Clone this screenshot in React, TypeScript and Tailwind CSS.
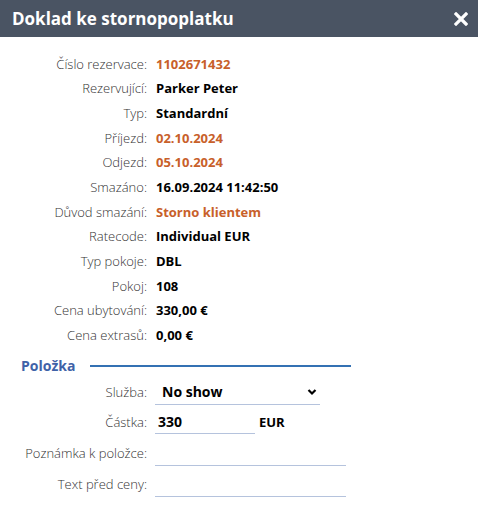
import React from 'react';

const rows = [
  { label: 'Číslo rezervace:', value: '1102671432', accent: true },
  { label: 'Rezervující:', value: 'Parker Peter' },
  { label: 'Typ:', value: 'Standardní' },
  { label: 'Příjezd:', value: '02.10.2024', accent: true },
  { label: 'Odjezd:', value: '05.10.2024', accent: true },
  { label: 'Smazáno:', value: '16.09.2024 11:42:50' },
  { label: 'Důvod smazání:', value: 'Storno klientem', accent: true },
  { label: 'Ratecode:', value: 'Individual EUR' },
  { label: 'Typ pokoje:', value: 'DBL' },
  { label: 'Pokoj:', value: '108' },
  { label: 'Cena ubytování:', value: '330,00 €' },
  { label: 'Cena extrasů:', value: '0,00 €' },
];

const App: React.FC = () => {
  return (
    <div className="w-[478px] h-[507px] overflow-hidden bg-white text-[13px] text-[#222]" style={{ fontFamily: '"Open Sans", sans-serif' }}>
      <div className="h-[37px] bg-[#4a5463] flex items-center justify-between pl-3 pr-[10px]">
        <h2 className="text-white font-bold text-[17px]">Doklad ke stornopoplatku</h2>
        <svg width="14" height="14" viewBox="0 0 14 14">
          <path d="M2 2 L12 12 M12 2 L2 12" stroke="white" strokeWidth="3.2" strokeLinecap="square" />
        </svg>
      </div>

      <div className="pt-[15px]">
        {rows.map(row => (
          <div key={row.label} className="flex items-center h-[24.7px]">
            <div className="w-[147px] text-right text-[#333] font-light">{row.label}</div>
            <div className={`ml-[9px] font-bold ${row.accent ? 'text-[#c8602a]' : 'text-black'}`}>{row.value}</div>
          </div>
        ))}
      </div>

      <div className="flex items-center mt-[7px] pl-[21px]">
        <span className="font-bold text-[#3f62a8] text-[14px]">Položka</span>
        <div className="ml-[15px] w-[261px] h-[1.5px] bg-[#3471b3]" />
      </div>

      <div className="flex items-end mt-[5px]">
        <div className="w-[147px] text-right text-[#333] font-light pb-[3px]">Služba:</div>
        <div className="ml-[8px] w-[165px] border-b border-[#b5c3dd] flex items-center justify-between pl-[7px] pr-[3px] pb-[2px]">
          <span className="font-bold text-black text-[14px]">No show</span>
          <svg width="10" height="8" viewBox="0 0 10 8">
            <path d="M1.5 2 L5 5.5 L8.5 2" stroke="black" strokeWidth="2.2" fill="none" />
          </svg>
        </div>
      </div>

      <div className="flex items-end mt-[6px]">
        <div className="w-[147px] text-right text-[#333] font-light pb-[2px]">Částka:</div>
        <div className="ml-[8px] w-[100px] border-b border-[#b5c3dd] pl-[3px] pb-[1px] font-bold text-black text-[14px]">330</div>
        <span className="ml-[4px] font-bold text-black pb-[2px]">EUR</span>
      </div>

      <div className="flex items-end mt-[9px]">
        <div className="w-[147px] text-right text-[#333] font-light pb-[3px]">Poznámka k položce:</div>
        <div className="ml-[8px] w-[191px] h-[23px] border-b border-[#b5c3dd]" />
      </div>

      <div className="flex items-end mt-[8px]">
        <div className="w-[147px] text-right text-[#333] font-light pb-[3px]">Text před ceny:</div>
        <div className="ml-[8px] w-[191px] h-[23px] border-b border-[#b5c3dd]" />
      </div>
    </div>
  );
};

export default App;
